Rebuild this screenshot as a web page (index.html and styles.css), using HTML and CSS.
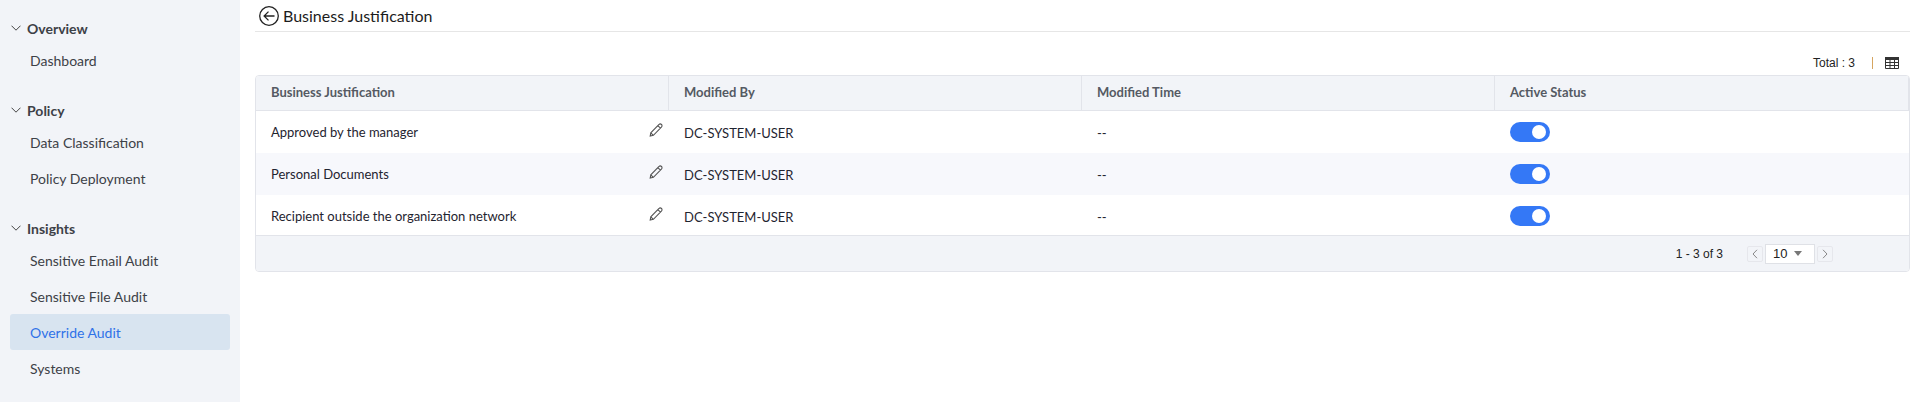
FILE: index.html
```html
<!DOCTYPE html>
<html lang="en">
<head>
<meta charset="utf-8">
<title>Business Justification</title>
<link rel="stylesheet" href="styles.css">
</head>
<body>
<div class="app">
  <nav class="sidebar">
    <section class="group">
      <h3 class="group-title"><svg class="chev" viewBox="0 0 10 6"><path d="M.5.7 5 5.2 9.500.7"/></svg>Overview</h3>
      <a class="item">Dashboard</a>
    </section>
    <section class="group">
      <h3 class="group-title"><svg class="chev" viewBox="0 0 10 6"><path d="M.5.7 5 5.2 9.500.7"/></svg>Policy</h3>
      <a class="item">Data Classification</a>
      <a class="item">Policy Deployment</a>
    </section>
    <section class="group">
      <h3 class="group-title"><svg class="chev" viewBox="0 0 10 6"><path d="M.5.7 5 5.2 9.500.7"/></svg>Insights</h3>
      <a class="item">Sensitive Email Audit</a>
      <a class="item">Sensitive File Audit</a>
      <a class="item active">Override Audit</a>
      <a class="item">Systems</a>
    </section>
  </nav>
  <main class="main">
    <header class="page-head">
      <svg class="back" viewBox="0 0 20 20"><circle cx="10" cy="10" r="9.300"/><path d="M15.500 10H5.300M9.500 5.600 5.100 10l4.400 4.400"/></svg>
      <h1 class="page-title">Business Justification</h1>
    </header>
    <div class="tools">
      <span class="total">Total : 3</span>
      <span class="divider"></span>
      <svg class="grid-icon" viewBox="0 0 14 12"><path class="grid-top" d="M0 0h14v3H0z"/><path class="grid-lines" d="M.5 3v8.500h13V3M.5 5.500h13M.5 8.500h13M5 3v8.500M9.500 3v8.500"/></svg>
    </div>
    <div class="table">
      <div class="row head">
        <div class="cell">Business Justification</div>
        <div class="cell">Modified By</div>
        <div class="cell">Modified Time</div>
        <div class="cell">Active Status</div>
      </div>
      <div class="row">
        <div class="cell name"><span>Approved by the manager</span><svg class="pencil" viewBox="0 0 14 14"><path d="M1.200 13 1.800 9.800 9.800 1.600c.8-.8 2-.8 2.700-.1s.7 1.900-.1 2.700L4.400 12.300ZM1.800 9.800 4.400 12.300M8.800 2.600l2.700 2.600"/></svg></div>
        <div class="cell value">DC-SYSTEM-USER</div>
        <div class="cell value">--</div>
        <div class="cell"><span class="toggle"><span class="knob"></span></span></div>
      </div>
      <div class="row alt">
        <div class="cell name"><span>Personal Documents</span><svg class="pencil" viewBox="0 0 14 14"><path d="M1.200 13 1.800 9.800 9.800 1.600c.8-.8 2-.8 2.700-.1s.7 1.900-.1 2.700L4.400 12.300ZM1.800 9.800 4.400 12.300M8.800 2.600l2.700 2.600"/></svg></div>
        <div class="cell value">DC-SYSTEM-USER</div>
        <div class="cell value">--</div>
        <div class="cell"><span class="toggle"><span class="knob"></span></span></div>
      </div>
      <div class="row last">
        <div class="cell name"><span>Recipient outside the organization network</span><svg class="pencil" viewBox="0 0 14 14"><path d="M1.200 13 1.800 9.800 9.800 1.600c.8-.8 2-.8 2.700-.1s.7 1.900-.1 2.700L4.400 12.300ZM1.800 9.800 4.400 12.300M8.800 2.600l2.700 2.600"/></svg></div>
        <div class="cell value">DC-SYSTEM-USER</div>
        <div class="cell value">--</div>
        <div class="cell"><span class="toggle"><span class="knob"></span></span></div>
      </div>
      <footer class="foot">
        <span class="range">1 - 3 of 3</span>
        <span class="pager"><svg viewBox="0 0 6 10"><path d="M5 .8 1 5l4 4.200"/></svg></span>
        <span class="size">10<i class="caret"></i></span>
        <span class="pager"><svg viewBox="0 0 6 10"><path d="M1 .8 5 5 1 9.200"/></svg></span>
      </footer>
    </div>
  </main>
</div>
</body>
</html>
```

FILE: styles.css
```css
* { box-sizing: border-box; }
html, body { margin: 0; height: 100%; }
body { font-family: Lato, "Liberation Sans", sans-serif; background: #fff; color: #1f2430; overflow: hidden; }
.app { display: flex; height: 402px; }

.sidebar { width: 240px; flex: none; background: #f2f4f8; padding: 14px 10px 0; }
.group { margin-bottom: 18px; }
.group-title { display: flex; align-items: center; height: 28px; margin: 0; font-size: 14px; font-weight: 700; color: #3d4147; }
.chev { width: 10px; height: 6px; margin: 0 6px 0 1px; fill: none; stroke: #444; stroke-width: 1; }
.item { display: flex; align-items: center; height: 36px; padding-left: 20px; font-size: 14px; color: #3d4147; border-radius: 3px; }
.item.active { background: #d8e4f0; color: #2f72e8; }

.main { flex: 1; min-width: 0; padding: 0 10px 0 15px; }
.page-head { display: flex; align-items: center; height: 32px; border-bottom: 1px solid #e6e6e6; padding-left: 4px; }
.back { width: 20px; height: 20px; margin-right: 4px; fill: none; stroke: #222; stroke-width: 1.300; }
.page-title { margin: 0; font-size: 16px; font-weight: 400; color: #1c1c1c; }

.tools { display: flex; align-items: center; justify-content: flex-end; height: 43px; padding: 18px 11px 0 0; }
.total { font-family: "Liberation Sans", Arial, sans-serif; font-size: 12px; color: #222; }
.divider { width: 1px; height: 12px; margin: 0 12px 0 17px; background: #d6a560; }
.grid-icon { width: 14px; height: 12px; }
.grid-top { fill: #333; }
.grid-lines { fill: none; stroke: #333; stroke-width: 1; }

.table { border: 1px solid #e2e4ea; border-radius: 4px; overflow: hidden; }
.row { display: grid; grid-template-columns: repeat(3, 413px) 1fr; height: 42px; align-items: center; font-size: 13px; }
.row.alt { background: #f7f8fc; }
.row.last { height: 41px; padding-top: 2px; border-bottom: 1px solid #e2e4ea; }
.row.head { height: 35px; background: #f2f4f8; border-bottom: 1px solid #e2e4ea; font-weight: 700; color: #555a63; }
.cell { padding: 0 15px; min-width: 0; }
.cell.value { padding-top: 2px; }
.head .cell { height: 100%; display: flex; align-items: center; padding-bottom: 3px; border-right: 1px solid #e2e4ea; }
.cell.name { display: flex; align-items: center; justify-content: space-between; padding-right: 6px; }
.pencil { width: 14px; height: 14px; margin-top: -4px; fill: none; stroke: #555; stroke-width: 1.100; }

.toggle { display: flex; justify-content: flex-end; align-items: center; width: 40px; height: 20px; padding-right: 4px; border-radius: 10px; background: #3478f6; }
.knob { width: 14px; height: 14px; border-radius: 50%; background: #fff; }

.foot { display: flex; align-items: center; justify-content: flex-end; height: 35px; padding-right: 76px; background: #f2f4f8; font-family: "Liberation Sans", Arial, sans-serif; font-size: 12px; color: #222; }
.range { margin-right: 24px; }
.pager { display: flex; align-items: center; justify-content: center; width: 16px; height: 16px; border: 1px solid #e6e7ec; border-radius: 2px; }
.pager svg { width: 6px; height: 10px; fill: none; stroke: #888; stroke-width: 1; }
.size { display: flex; align-items: center; justify-content: space-between; width: 50px; height: 20px; margin: 0 2px; padding: 0 12px 0 7px; background: #fff; border: 1px solid #dfe1e6; font-size: 13px; }
.caret { width: 0; height: 0; border: 4px solid transparent; border-top: 5px solid #777; border-bottom: 0; }
```
